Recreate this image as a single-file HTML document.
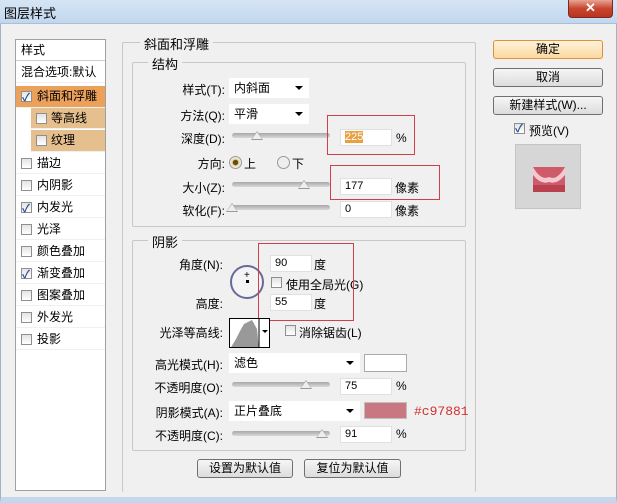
<!DOCTYPE html>
<html><head><meta charset="utf-8"><style>
*{margin:0;padding:0;box-sizing:border-box}
body{width:617px;height:503px;overflow:hidden;background:#f0f0f0;font-family:"Liberation Sans","Noto Sans CJK SC",sans-serif;font-size:12px;color:#000;position:relative}
.a{position:absolute;white-space:nowrap}
.title{left:0;top:0;width:617px;height:24px;background:linear-gradient(#d6e5f5,#c2d7ee);border-bottom:1px solid #a9bfd6}
.close{left:568px;top:0;width:45px;height:18px;background:linear-gradient(#e8a494,#c8452e 50%,#b83420);border:1px solid #7a2a20;border-top:none;border-radius:0 0 4px 4px;color:#fff;font-weight:bold;text-align:center;line-height:16px;font-size:13px}
.frame{left:0;top:24px;width:617px;height:479px;border:1px solid #9fb3c9;border-top:none;border-bottom:6px solid #c5d7ea}
.list{left:15px;top:39px;width:91px;height:452px;background:#fff;border:1px solid #a0a0a0}
.row{position:absolute;left:0;width:89px;height:21px;line-height:21px;padding-left:21px;border-bottom:1px solid #f0f0f0}
.cb{position:absolute;width:11px;height:11px;border:1px solid #8f8f8f;background:linear-gradient(#e4e4e4,#fff)}
.cb.on::after{content:"✓";position:absolute;left:0;top:-4px;font-size:11px;color:#2a4d9a;font-weight:bold}
.fs{position:absolute;border:1px solid #c8c8c8;border-radius:2px}
.lg{position:absolute;background:#f0f0f0;padding:0 4px;font-size:13px}
.lbl{position:absolute;text-align:right;font-size:12px}
.sel{position:absolute;height:20px;background:#fff;line-height:20px;padding-left:5px;font-size:12px}
.sel::after{content:"";position:absolute;right:6px;top:8px;border:4px solid transparent;border-top:4px solid #000;border-bottom:0}
.inp{position:absolute;height:17px;background:#fff;border:1px solid #e0e0e0;line-height:15px;padding-left:4px;font-size:11px}
.sl{position:absolute;height:5px;width:98px;background:linear-gradient(#a8a8a8,#d8d8d8);border-radius:3px}
.th{position:absolute;top:-2px;width:0;height:0;border-left:6px solid transparent;border-right:6px solid transparent;border-bottom:9px solid #999}
.th::after{content:"";position:absolute;left:-5px;top:1px;border-left:5px solid transparent;border-right:5px solid transparent;border-bottom:7px solid #eee}
.btn{position:absolute;height:19px;border:1px solid #707070;border-radius:3px;background:linear-gradient(#f6f6f6,#dcdcdc);text-align:center;line-height:17px;font-size:12px}
.red{position:absolute;border:1px solid #d0404a}
.rad{position:absolute;width:13px;height:13px;border-radius:50%;border:1px solid #999;background:#eee}
</style></head><body>
<div class="a title"></div>
<div class="a" style="left:4px;top:3px;font-size:13px">图层样式</div>
<div class="a close">✕</div>
<div class="a frame"></div>

<div class="a list">
 <div class="row" style="top:0;padding-left:5px;border-bottom:1px solid #ccc">样式</div>
 <div class="row" style="top:22px;padding-left:5px">混合选项:默认</div>
 <div class="row" style="top:46px;background:#eba15a;height:22px"><span class="cb on" style="left:5px;top:5px"></span>斜面和浮雕</div>
 <div class="row" style="top:68px;left:15px;width:74px;background:#e5bf8e;padding-left:20px"><span class="cb" style="left:5px;top:5px"></span>等高线</div>
 <div class="row" style="top:90px;left:15px;width:74px;background:#e5bf8e;padding-left:20px;height:22px"><span class="cb" style="left:5px;top:5px"></span>纹理</div>
 <div class="row" style="top:113px"><span class="cb" style="left:5px;top:5px"></span>描边</div>
 <div class="row" style="top:135px"><span class="cb" style="left:5px;top:5px"></span>内阴影</div>
 <div class="row" style="top:157px"><span class="cb on" style="left:5px;top:5px"></span>内发光</div>
 <div class="row" style="top:179px"><span class="cb" style="left:5px;top:5px"></span>光泽</div>
 <div class="row" style="top:201px"><span class="cb" style="left:5px;top:5px"></span>颜色叠加</div>
 <div class="row" style="top:223px"><span class="cb on" style="left:5px;top:5px"></span>渐变叠加</div>
 <div class="row" style="top:245px"><span class="cb" style="left:5px;top:5px"></span>图案叠加</div>
 <div class="row" style="top:267px"><span class="cb" style="left:5px;top:5px"></span>外发光</div>
 <div class="row" style="top:289px"><span class="cb" style="left:5px;top:5px"></span>投影</div>
</div>

<div class="fs" style="left:122px;top:42px;width:354px;height:450px;border-bottom:none"></div>
<div class="lg" style="left:140px;top:34px">斜面和浮雕</div>
<div class="fs" style="left:132px;top:62px;width:334px;height:165px"></div>
<div class="lg" style="left:148px;top:54px">结构</div>
<div class="fs" style="left:132px;top:240px;width:334px;height:211px"></div>
<div class="lg" style="left:148px;top:232px">阴影</div>

<div class="lbl" style="left:150px;top:81px;width:75px">样式(T):</div>
<div class="sel" style="left:229px;top:78px;width:80px">内斜面</div>
<div class="lbl" style="left:150px;top:107px;width:75px">方法(Q):</div>
<div class="sel" style="left:229px;top:104px;width:80px">平滑</div>
<div class="lbl" style="left:150px;top:130px;width:75px">深度(D):</div>
<div class="sl" style="left:232px;top:133px"><div class="th" style="left:19px"></div></div>
<div class="inp" style="left:340px;top:129px;width:52px"><span style="background:#e8a040;color:#fff">225</span></div>
<div class="a" style="left:396px;top:131px">%</div>
<div class="red" style="left:327px;top:115px;width:88px;height:40px"></div>
<div class="lbl" style="left:150px;top:155px;width:75px">方向:</div>
<div class="rad" style="left:229px;top:156px;background:radial-gradient(#6a4a10 30%,#e8d8a0 40%,#eee 70%)"></div>
<div class="a" style="left:244px;top:155px">上</div>
<div class="rad" style="left:277px;top:156px"></div>
<div class="a" style="left:292px;top:155px">下</div>
<div class="lbl" style="left:150px;top:179px;width:75px">大小(Z):</div>
<div class="sl" style="left:232px;top:182px"><div class="th" style="left:66px"></div></div>
<div class="inp" style="left:340px;top:178px;width:52px">177</div>
<div class="a" style="left:395px;top:179px">像素</div>
<div class="red" style="left:330px;top:165px;width:110px;height:35px"></div>
<div class="lbl" style="left:150px;top:202px;width:75px">软化(F):</div>
<div class="sl" style="left:232px;top:205px"><div class="th" style="left:-6px"></div></div>
<div class="inp" style="left:340px;top:201px;width:52px">0</div>
<div class="a" style="left:395px;top:202px">像素</div>

<div class="lbl" style="left:140px;top:256px;width:83px">角度(N):</div>
<div class="a" style="left:230px;top:265px;width:34px;height:34px;border-radius:50%;border:2px solid #6a6a9a;background:#f4f4f4"></div>
<div class="a" style="left:244px;top:270px;font-size:10px">+</div>
<div class="a" style="left:246px;top:280px;width:3px;height:3px;background:#000"></div>
<div class="inp" style="left:270px;top:255px;width:42px">90</div>
<div class="a" style="left:314px;top:256px">度</div>
<div class="cb" style="left:271px;top:277px"></div>
<div class="a" style="left:286px;top:276px">使用全局光(G)</div>
<div class="lbl" style="left:140px;top:295px;width:83px">高度:</div>
<div class="inp" style="left:270px;top:294px;width:42px">55</div>
<div class="a" style="left:314px;top:295px">度</div>
<div class="red" style="left:258px;top:243px;width:96px;height:78px"></div>

<div class="lbl" style="left:140px;top:324px;width:83px">光泽等高线:</div>
<div class="a" style="left:229px;top:318px;width:41px;height:30px;border:1px solid #000;background:#fff;overflow:hidden">
<svg width="41" height="30" style="position:absolute;left:0;top:0"><path d="M0 30 L6 20 L10 12 L14 5 L18 3 L22 1 L27 10 L29 30 Z" fill="#999"/><line x1="29" y1="0" x2="29" y2="30" stroke="#000"/><path d="M32 11 L38 11 L35 14Z" fill="#000"/></svg></div>
<div class="cb" style="left:285px;top:325px"></div>
<div class="a" style="left:299px;top:324px">消除锯齿(L)</div>

<div class="lbl" style="left:140px;top:356px;width:83px">高光模式(H):</div>
<div class="sel" style="left:229px;top:353px;width:131px">滤色</div>
<div class="a" style="left:364px;top:354px;width:43px;height:18px;background:#fff;border:1px solid #aaa"></div>
<div class="lbl" style="left:140px;top:379px;width:83px">不透明度(O):</div>
<div class="sl" style="left:232px;top:382px"><div class="th" style="left:68px"></div></div>
<div class="inp" style="left:340px;top:378px;width:52px">75</div>
<div class="a" style="left:396px;top:379px">%</div>
<div class="lbl" style="left:140px;top:404px;width:83px">阴影模式(A):</div>
<div class="sel" style="left:229px;top:401px;width:131px">正片叠底</div>
<div class="a" style="left:364px;top:402px;width:43px;height:17px;background:#c97881;border:1px solid #c0c0c0"></div>
<div class="a" style="left:414px;top:404px;color:#d03030;font-family:'Liberation Mono',monospace;font-size:13px">#c97881</div>
<div class="lbl" style="left:140px;top:427px;width:83px">不透明度(C):</div>
<div class="sl" style="left:232px;top:431px"><div class="th" style="left:84px"></div></div>
<div class="inp" style="left:340px;top:426px;width:52px">91</div>
<div class="a" style="left:396px;top:427px">%</div>

<div class="btn" style="left:197px;top:459px;width:96px">设置为默认值</div>
<div class="btn" style="left:304px;top:459px;width:97px">复位为默认值</div>

<div class="btn" style="left:493px;top:40px;width:110px;border-color:#e0903a;background:linear-gradient(#fff3dc,#fbd9a0)">确定</div>
<div class="btn" style="left:493px;top:68px;width:110px">取消</div>
<div class="btn" style="left:493px;top:96px;width:110px">新建样式(W)...</div>
<div class="cb on" style="left:514px;top:123px"></div>
<div class="a" style="left:529px;top:122px">预览(V)</div>
<div class="a" style="left:515px;top:144px;width:66px;height:65px;background:#d6d6d6;border:1px solid #c4c4c4">
<svg width="66" height="65" style="position:absolute;left:0;top:0"><rect x="17" y="22" width="32" height="25" fill="#cf5a6a"/><path d="M17 22 Q25 36 33 32 Q41 36 49 22 L49 30 Q41 40 33 37 Q25 40 17 30Z" fill="#f4c8cf"/><rect x="17" y="40" width="32" height="7" fill="#b8404f"/></svg></div>
</body></html>
